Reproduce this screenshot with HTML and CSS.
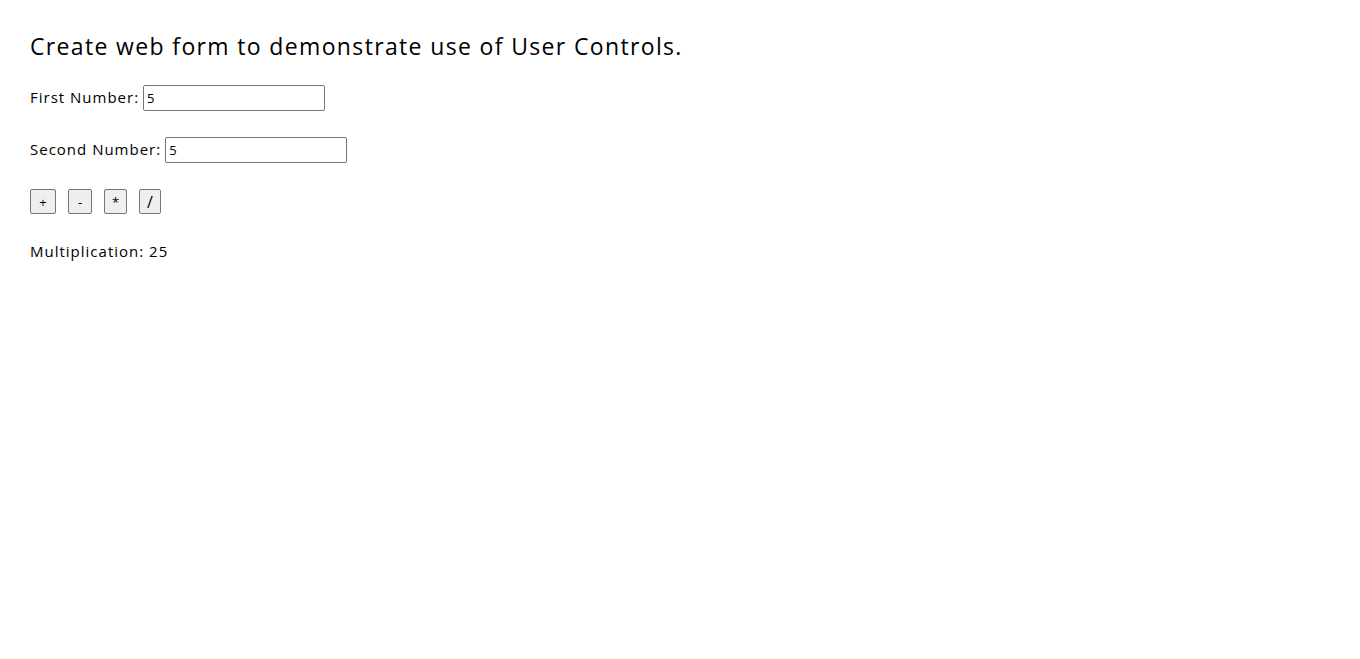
FILE: index.html
```html
<!DOCTYPE html>
<html>
<head>
<meta charset="utf-8">
<link rel="stylesheet" href="styles.css">
</head>
<body>
<h1 class="title">Create web form to demonstrate use of User Controls.</h1>
<form class="calc">
  <div class="row"><span class="label">First Number:</span> <input class="num" type="text" value="5"></div>
  <div class="row"><span class="label">Second Number:</span> <input class="num" type="text" value="5"></div>
  <div class="buttons">
    <button type="button" class="op op-plus">+</button>
    <button type="button" class="op op-minus">-</button>
    <button type="button" class="op op-mul">*</button>
    <button type="button" class="op op-div">/</button>
  </div>
  <div class="result">Multiplication: 25</div>
</form>
</body>
</html>
```
FILE: styles.css
```css
html, body { margin: 0; background: #fff; }
body {
  padding: 31px 30px 30px;
  font-family: "Open Sans", "DejaVu Sans", sans-serif;
  color: #000;
}
.title {
  font-size: 23px;
  font-weight: 400;
  margin: 0 0 24px 0;
  line-height: 30px;
  letter-spacing: 1.35px;
}
.calc { font-size: 15px; letter-spacing: 1px; }
.row {
  display: flex;
  align-items: center;
  gap: 4px;
  height: 26px;
  margin-bottom: 26px;
}
.label { line-height: 20px; padding-bottom: 2px; }
.num {
  box-sizing: border-box;
  width: 182px;
  height: 26px;
  border: 1px solid #767676;
  border-radius: 2px;
  padding: 1px 3px;
  font-family: "Open Sans", sans-serif;
  font-size: 13px;
  letter-spacing: 0;
}
.buttons {
  display: flex;
  gap: 12px;
  margin-top: 26px;
}
.op {
  box-sizing: border-box;
  height: 25px;
  padding: 0;
  border: 1px solid #767676;
  border-radius: 2px;
  background: #efefef;
  font-family: "Open Sans", sans-serif;
  font-size: 13px;
  color: #000;
  letter-spacing: 0;
}
.op-plus { width: 26px; }
.op-minus { width: 24px; }
.op-mul { width: 23px; }
.op-div { width: 22px; font-size: 16px; }
.result { margin-top: 27px; line-height: 20px; }
```
